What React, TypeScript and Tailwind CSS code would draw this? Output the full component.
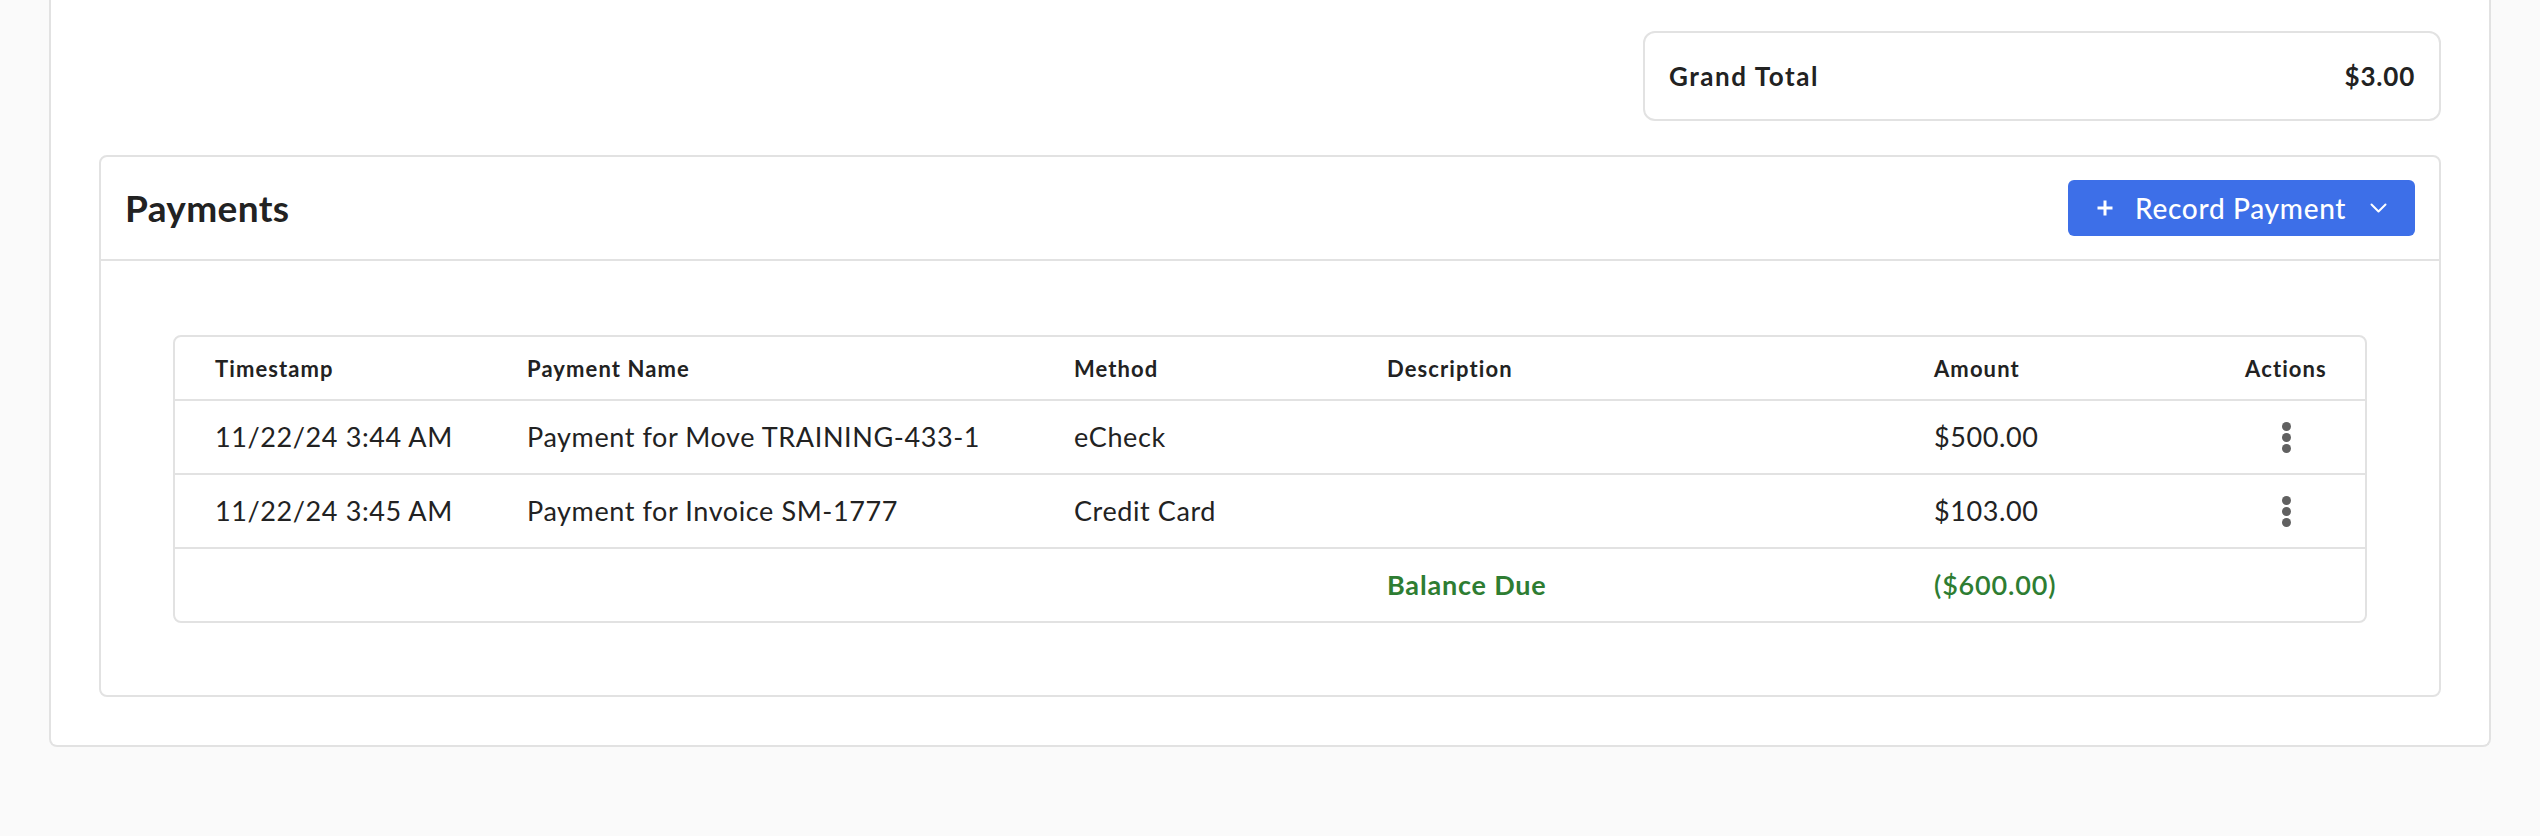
import React from "react";

const rows = [
  { ts: "11/22/24 3:44 AM", name: "Payment for Move TRAINING-433-1", method: "eCheck", desc: "", amount: "$500.00" },
  { ts: "11/22/24 3:45 AM", name: "Payment for Invoice SM-1777", method: "Credit Card", desc: "", amount: "$103.00" },
];

const gridCols = "grid grid-cols-[312px_547px_313px_547px_313px_1fr]";

function Kebab() {
  return (
    <div className="flex flex-col items-center gap-[2px]">
      <span className="block w-[9px] h-[9px] rounded-full bg-[#616161]" />
      <span className="block w-[9px] h-[9px] rounded-full bg-[#616161]" />
      <span className="block w-[9px] h-[9px] rounded-full bg-[#616161]" />
    </div>
  );
}

export default function App() {
  return (
    <div
      className="w-full h-[836px] bg-[#fafafa] text-[#222222]"
      style={{ fontFamily: "Lato, 'Open Sans', sans-serif" }}
    >
      <div className="ml-[49px] w-[2442px] bg-white border-2 border-t-0 border-[#e2e2e2] rounded-b-lg px-[48px] pt-[31px] pb-[48px]">
        <div className="flex justify-end">
          <div className="w-[798px] h-[90px] border-2 border-[#e2e2e2] rounded-[12px] flex items-center justify-between px-[24px]">
            <span className="text-[26px] font-bold tracking-[0.06em]">Grand Total</span>
            <span className="text-[26px] font-bold tracking-[0.03em]">$3.00</span>
          </div>
        </div>

        <div className="mt-[34px] border-2 border-[#e2e2e2] rounded-lg">
          <div className="h-[104px] border-b-2 border-[#e2e2e2] flex items-center justify-between px-[24px]">
            <h2 className="text-[37px] font-bold tracking-[0.01em]">Payments</h2>
            <button className="w-[347px] h-[56px] rounded-[6px] bg-[#3d6fe8] text-white flex items-center pl-[28px] pr-[28px]">
              <svg width="18" height="18" viewBox="0 0 18 18" className="shrink-0">
                <path d="M9 1.5v15M1.5 9h15" stroke="white" strokeWidth="3" strokeLinecap="butt" />
              </svg>
              <span className="ml-[21px] text-[28px] font-medium tracking-[0.025em]">Record Payment</span>
              <svg width="17" height="10" viewBox="0 0 17 10" className="ml-auto shrink-0">
                <path d="M1.5 1.5l7 7 7-7" stroke="white" strokeWidth="2" fill="none" strokeLinecap="round" strokeLinejoin="round" />
              </svg>
            </button>
          </div>

          <div className="px-[72px] pt-[74px] pb-[72px]">
            <div className="border-2 border-[#e2e2e2] rounded-lg">
              <div className={`${gridCols} h-[64px] items-center border-b-2 border-[#e2e2e2] text-[22px] font-bold tracking-[0.05em]`}>
                <div className="pl-[40px]">Timestamp</div>
                <div className="pl-[40px]">Payment Name</div>
                <div className="pl-[40px]">Method</div>
                <div className="pl-[40px]">Description</div>
                <div className="pl-[40px]">Amount</div>
                <div className="text-center">Actions</div>
              </div>
              {rows.map((r) => (
                <div key={r.ts} className={`${gridCols} h-[74px] items-center border-b-2 border-[#e2e2e2] text-[27px] tracking-[0.022em]`}>
                  <div className="pl-[40px]">{r.ts}</div>
                  <div className="pl-[40px]">{r.name}</div>
                  <div className="pl-[40px]">{r.method}</div>
                  <div className="pl-[40px]">{r.desc}</div>
                  <div className="pl-[40px]">{r.amount}</div>
                  <div className="flex justify-center">
                    <Kebab />
                  </div>
                </div>
              ))}
              <div className={`${gridCols} h-[72px] items-center text-[27px] text-[#2e7d32] tracking-[0.03em]`}>
                <div />
                <div />
                <div />
                <div className="pl-[40px] font-bold">Balance Due</div>
                <div className="pl-[40px] font-semibold">($600.00)</div>
                <div />
              </div>
            </div>
          </div>
        </div>
      </div>
    </div>
  );
}
